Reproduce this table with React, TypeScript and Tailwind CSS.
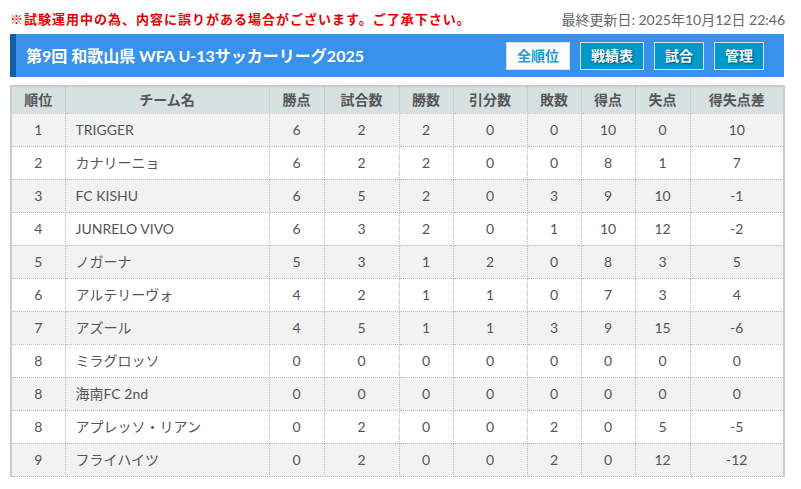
import React from "react";

type Row = [string, string, number, number, number, number, number, number, number, number];

const rows: Row[] = [
  ["1", "TRIGGER", 6, 2, 2, 0, 0, 10, 0, 10],
  ["2", "カナリーニョ", 6, 2, 2, 0, 0, 8, 1, 7],
  ["3", "FC KISHU", 6, 5, 2, 0, 3, 9, 10, -1],
  ["4", "JUNRELO VIVO", 6, 3, 2, 0, 1, 10, 12, -2],
  ["5", "ノガーナ", 5, 3, 1, 2, 0, 8, 3, 5],
  ["6", "アルテリーヴォ", 4, 2, 1, 1, 0, 7, 3, 4],
  ["7", "アズール", 4, 5, 1, 1, 3, 9, 15, -6],
  ["8", "ミラグロッソ", 0, 0, 0, 0, 0, 0, 0, 0],
  ["8", "海南FC 2nd", 0, 0, 0, 0, 0, 0, 0, 0],
  ["8", "アプレッソ・リアン", 0, 2, 0, 0, 2, 0, 5, -5],
  ["9", "フライハイツ", 0, 2, 0, 0, 2, 0, 12, -12],
];

const heads = ["順位", "チーム名", "勝点", "試合数", "勝数", "引分数", "敗数", "得点", "失点", "得失点差"];
const widths = ["w-[54px]", "w-[204px]", "w-[55px]", "w-[75px]", "w-[54px]", "w-[74px]", "w-[54px]", "w-[54px]", "w-[55px]", "w-[94px]"];

const navButtons = ["戦績表", "試合", "管理"];

export default function App() {
  return (
    <div
      className="w-[801px] h-[489px] bg-white px-[10px] pt-[10px] text-[#555]"
      style={{ fontFamily: 'Lato, "Noto Sans CJK JP", sans-serif' }}
    >
      <div className="flex items-center justify-between h-[19px] pr-[6px]">
        <p className="text-[13px] font-bold text-[#e60000] tracking-[1px]">
          ※試験運用中の為、内容に誤りがある場合がございます。ご了承下さい。
        </p>
        <p className="text-[14px] text-[#666]">最終更新日: 2025年10月12日 22:46</p>
      </div>

      <div className="mt-[5px] w-[774px] h-[43px] bg-[#3891eb] border-l-[6px] border-[#165ea6] flex items-center justify-between pl-[10px] pr-[20px]">
        <h1 className="text-[16px] font-bold text-white">第9回 和歌山県 WFA U-13サッカーリーグ2025</h1>
        <div className="flex gap-[10px]">
          <button className="w-[64px] h-[28px] bg-white border border-[#ddd] text-[#1a9ad6] text-[14px] font-bold">
            全順位
          </button>
          {navButtons.map((b) => (
            <button
              key={b}
              className="px-[10px] h-[28px] bg-[#0099cc] border border-[#ddd] text-white text-[14px] font-bold [text-shadow:1px_1px_2px_rgba(0,0,0,0.5)]"
            >
              {b}
            </button>
          ))}
        </div>
      </div>

      <table className="mt-[8px] w-[773px] border-collapse table-fixed text-[14px] border-x-2 border-t-2 border-[#ccc]">
        <thead>
          <tr className="bg-[#d5e0e1] h-[27px]">
            {heads.map((h, i) => (
              <th
                key={h}
                className={`${widths[i]} font-bold text-[#555] text-center border-x border-dotted border-x-[#bbb] border-b border-b-[#ccc] border-b-solid`}
              >
                {h}
              </th>
            ))}
          </tr>
        </thead>
        <tbody>
          {rows.map((r, idx) => (
            <tr key={idx} className={`h-[33px] ${idx % 2 === 0 ? "bg-[#f2f2f2]" : "bg-white"}`}>
              {r.map((v, i) => (
                <td
                  key={i}
                  className={`border border-dotted border-[#bbb] ${i === 1 ? "text-left pl-[10px]" : "text-center"}`}
                >
                  {v}
                </td>
              ))}
            </tr>
          ))}
        </tbody>
      </table>
    </div>
  );
}
